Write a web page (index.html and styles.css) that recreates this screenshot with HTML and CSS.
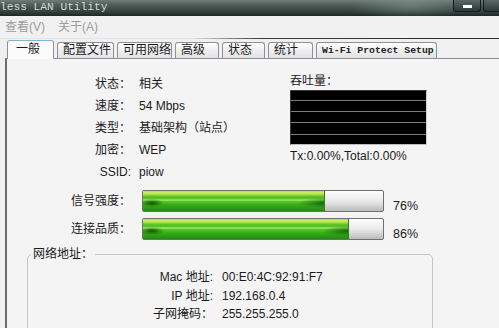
FILE: index.html
```
<!DOCTYPE html>
<html lang="zh-CN">
<head>
<meta charset="utf-8">
<title>Wireless LAN Utility</title>
<link rel="stylesheet" href="styles.css">
</head>
<body>
<div class="titlebar">
  <span class="title">less LAN Utility</span>
  <div class="wbtns"><span class="wbtn min"></span><span class="wbtn max"></span></div>
</div>
<div class="menubar"><span>查看(V)</span><span>关于(A)</span></div>
<div class="sep"></div>
<div class="tabs">
  <div class="tab sel t1">一般</div>
  <div class="tab t2">配置文件</div>
  <div class="tab t3">可用网络</div>
  <div class="tab t4">高级</div>
  <div class="tab t5">状态</div>
  <div class="tab t6">统计</div>
  <div class="tab t7 mono">Wi-Fi Protect Setup</div>
</div>
<div class="panel">
  <div class="top">
    <div class="info">
      <span class="lbl">状态：</span><span>相关</span>
      <span class="lbl">速度：</span><span>54 Mbps</span>
      <span class="lbl">类型：</span><span>基础架构（站点）</span>
      <span class="lbl">加密：</span><span>WEP</span>
      <span class="lbl">SSID:</span><span>piow</span>
    </div>
    <div class="thru">
      <div class="cap">吞吐量：</div>
      <div class="graph"></div>
      <div class="tx">Tx:0.00%,Total:0.00%</div>
    </div>
  </div>
  <div class="bars">
    <span class="lbl">信号强度：</span>
    <div class="bar"><div class="fill" style="width:76%"></div></div>
    <span class="pct">76%</span>
    <span class="lbl">连接品质：</span>
    <div class="bar"><div class="fill" style="width:86%"></div></div>
    <span class="pct">86%</span>
  </div>
  <fieldset class="group">
    <legend>网络地址：</legend>
    <div class="addr">
      <span class="lbl">Mac 地址:</span><span>00:E0:4C:92:91:F7</span>
      <span class="lbl">IP 地址:</span><span>192.168.0.4</span>
      <span class="lbl">子网掩码：</span><span>255.255.255.0</span>
    </div>
  </fieldset>
</div>
</body>
</html>
```
FILE: styles.css
```
* { box-sizing: border-box; }
html, body { margin: 0; }
body {
  width: 499px;
  height: 328px;
  overflow: hidden;
  background: #f0f0f0;
  font-family: "Liberation Sans", "Noto Sans CJK SC", sans-serif;
  font-size: 12px;
  color: #1b1b1b;
}

.titlebar {
  height: 16px;
  display: flex;
  justify-content: space-between;
  background:
    radial-gradient(ellipse 60px 14px at 410px 6px, rgba(170,185,180,.35), rgba(170,185,180,0)),
    linear-gradient(#6f7b77 0%, #4c5a56 35%, #36443f 70%, #1c2825 100%);
  overflow: hidden;
}
.title {
  font: 11.2px/15px "Liberation Mono", monospace;
  color: #d3dad6;
}
.wbtns { display: flex; gap: 2px; margin-right: -12px; }
.wbtn {
  width: 28px;
  height: 12px;
  border: 1px solid #141c1a;
  border-top: none;
  border-radius: 0 0 3px 3px;
  background: linear-gradient(#5a6966, #2c3835);
  display: flex;
  justify-content: center;
  align-items: center;
}
.wbtn.min::after {
  content: "";
  width: 9px;
  height: 3px;
  background: #fff;
  margin-top: 1px;
}

.menubar {
  height: 22px;
  display: flex;
  align-items: center;
  gap: 13px;
  padding-left: 5px;
  color: #9c9c9c;
  background: #f1f1f1;
  line-height: 16px;
}
.sep {
  height: 1px;
  background: linear-gradient(to right, #e6e6e6 0, #e6e6e6 190px, #3c3c3c 260px, #2a2a2a 100%);
}

.tabs {
  height: 19px;
  display: flex;
  align-items: flex-end;
  gap: 3px;
  padding-left: 7px;
}
.tab {
  height: 16px;
  border: 1px solid #8d9096;
  border-bottom: none;
  border-radius: 3px 3px 0 0;
  background: linear-gradient(#fefefe, #efefef 50%, #e2e2e2);
  padding-left: 5px;
  line-height: 15px;
  white-space: nowrap;
}
.tab.sel {
  height: 19px;
  margin-bottom: -1px;
  position: relative;
  z-index: 1;
  background: #fbfbfb;
  border-top-color: #86b0cf;
  padding-left: 8px;
  line-height: 16px;
}
.t1 { width: 47px; }
.t2 { width: 57px; }
.t3 { width: 55px; }
.t4 { width: 44px; }
.t5 { width: 43px; }
.t6 { width: 45px; }
.t7 { width: 121px; }
.mono {
  font: bold 9.8px/15px "Liberation Mono", monospace;
  color: #222;
}

.panel {
  margin-left: 5px;
  height: 270px;
  overflow: hidden;
  border-left: 2px solid #6c6c6c;
  border-top: 1px solid #8d9096;
  background: #f4f4f4;
}

.top {
  display: grid;
  grid-template-columns: 283px 137px;
  padding-top: 14px;
}
.info {
  display: grid;
  grid-template-columns: 124px auto;
  column-gap: 8px;
  grid-auto-rows: 22px;
  align-items: center;
  line-height: 16px;
}
.lbl { text-align: right; white-space: nowrap; }

.thru { line-height: 16px; }
.graph {
  margin-top: 1px;
  width: 137px;
  height: 55px;
  border: 1px solid #3a3a3a;
  border-right-color: #cfcfcf;
  border-bottom-color: #bdbdbd;
  background:
    linear-gradient(#7c7c7c, #7c7c7c) 0 9px / 100% 1px no-repeat,
    linear-gradient(#7c7c7c, #7c7c7c) 0 20px / 100% 1px no-repeat,
    linear-gradient(#7c7c7c, #7c7c7c) 0 31px / 100% 1px no-repeat,
    linear-gradient(#7c7c7c, #7c7c7c) 0 43px / 100% 1px no-repeat,
    #000;
}
.tx { margin-top: 3px; white-space: nowrap; }

.bars {
  margin-top: 7px;
  display: grid;
  grid-template-columns: 124px 253px auto;
  grid-auto-rows: 22px;
  row-gap: 6px;
  align-items: center;
  line-height: 16px;
}
.bar {
  margin-left: 11px;
  width: 242px;
  height: 22px;
  border: 1px solid #6f6f6f;
  border-radius: 2px;
  overflow: hidden;
  background: linear-gradient(#fdfdfd 0%, #f1f1f1 35%, #e2e2e2 60%, #c9c9c9 85%, #bcbcbc 100%);
}
.fill {
  height: 100%;
  background:
    radial-gradient(ellipse 12px 4px at 9px 12px, rgba(12,72,6,.9), rgba(12,72,6,0)),
    radial-gradient(ellipse 26px 5px at 100% 12px, rgba(18,90,10,.85), rgba(18,90,10,0)),
    linear-gradient(#b5dd48 0px, #cdef62 2px, #96d83e 4px, #4cbc22 6px, #5dc92c 8px, #a6ef74 9px, #56c52a 10.5px, #36ab18 14px, #2b9c14 17px, #27871a 20px);
  border-right: 1px solid #3d7a22;
}
.pct {
  align-self: start;
  padding-top: 8px;
  padding-left: 9px;
  font-size: 12.5px;
}

.group {
  margin: 6px 0 0 20px;
  width: 406px;
  height: 90px;
  padding: 6px 0 0 3px;
  border: 1px solid #c6c6c6;
  border-radius: 5px;
  min-width: 0;
}
.group legend {
  padding: 0 2px;
  line-height: 16px;
}
.addr {
  display: grid;
  grid-template-columns: 182px auto;
  column-gap: 9px;
  grid-auto-rows: 18.5px;
  align-items: center;
  line-height: 16px;
}
```
